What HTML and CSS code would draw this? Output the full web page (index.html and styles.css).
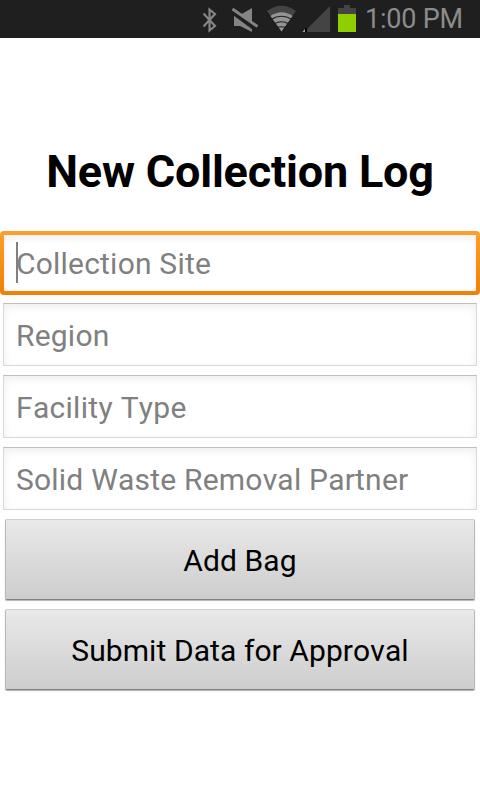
FILE: index.html
```html
<!DOCTYPE html>
<html lang="en"><head><meta charset="utf-8"><title>New Collection Log</title><link rel="stylesheet" href="styles.css"></head>
<body>
<header class="status">
<svg class="icons" width="160" height="38" viewBox="200 0 160 38">
<path d="M203.500 13.500L215 26l-5.500 4.500V9.500L215 14 203.500 26.500" fill="none" stroke="#848484" stroke-width="2.200"/>
<path d="M234 15h6l12-7v24l-12-6h-6z" fill="#848484"/>
<path d="M231 10.500l25 18.500" stroke="#1f1f1f" stroke-width="5"/><path d="M232.500 9l25 17.500" stroke="#848484" stroke-width="2.800"/>
<path d="M281.500 31.500L267 11q14.500-10.500 29 0z" fill="#444"/>
<path d="M281.500 31.500L270.500 16q11-7.500 22 0z" fill="#949494"/>
<path d="M271 19.500q10.500-6.500 21 0M274 24q7.500-4.500 15 0M276.500 28q5-2.500 10 0" fill="none" stroke="#1f1f1f" stroke-width="1.200"/>
<path d="M330 6v26h-26z" fill="#444"/><path d="M305 28h2v4h-2z" fill="#000"/><path d="M302.500 32l2.500-3v3z" fill="#aaa"/>
<path d="M344 5h6v3h6v6h-18V8h6z" fill="#444"/><path d="M338 14h18v18h-18z" fill="#8fcf00"/>
</svg><span class="time">1:00 PM</span>
</header>
<main>
<h1>New Collection Log</h1>
<div class="field focus"><i class="caret"></i><span>Collection Site</span></div>
<div class="field"><span>Region</span></div>
<div class="field type"><span>Facility Type</span></div>
<div class="field"><span>Solid Waste Removal Partner</span></div>
<button><span>Add Bag</span></button>
<button><span>Submit Data for Approval</span></button>
</main>
</body></html>
```
FILE: styles.css
```css
* { box-sizing: border-box; }
body { margin: 0; background: #fff; font-family: Roboto, sans-serif; color: #000; font-kerning: none; }
.status { height: 38px; background: #1f1f1f; display: flex; padding-left: 200px; }
.time { font-size: 27px; line-height: 39px; color: #8c8c8c; margin-left: 5px; letter-spacing: -.2px; white-space: nowrap; }
h1 { margin: 0; padding-top: 102px; height: 193px; font-size: 45px; letter-spacing: -.2px; line-height: 64px; text-align: center; white-space: nowrap; }
.field { height: 63px; margin: 0 3px 9px; border: 1px solid #d8d8d8; border-top-color: #bdbdbd; padding-left: 12px; font-size: 30px; letter-spacing: .21px; line-height: 63px; color: #808080; box-shadow: inset 0 3px 8px rgba(0,0,0,.07); }
.type { letter-spacing: .3px; }
.focus { position: relative; height: 64px; margin: 0 0 8px; border: 0; border-radius: 4px; padding: 4px 4px 4px 16px; line-height: 57px; background: linear-gradient(#fca02c, #f07f05); box-shadow: none; }
.focus::before { content: ""; position: absolute; inset: 4px; background: #fff; box-shadow: inset 0 3px 8px rgba(0,0,0,.07); }
.focus span { position: relative; }
.caret { position: absolute; left: 16px; top: 11px; width: 1.5px; height: 41px; background: #808080; }
button { display: block; width: 470px; height: 81px; margin: 0 5px 9px; padding: 2px 0 0; border: 1px solid #b8b8b8; border-top-color: #cfcfcf; border-bottom-color: #808080; border-radius: 2px; background: linear-gradient(#e9e9e9, #cdcdcd); box-shadow: 0 1px 1px rgba(0,0,0,.3); font: 30px Roboto, sans-serif; font-kerning: none; letter-spacing: .08px; color: #000; }
```
